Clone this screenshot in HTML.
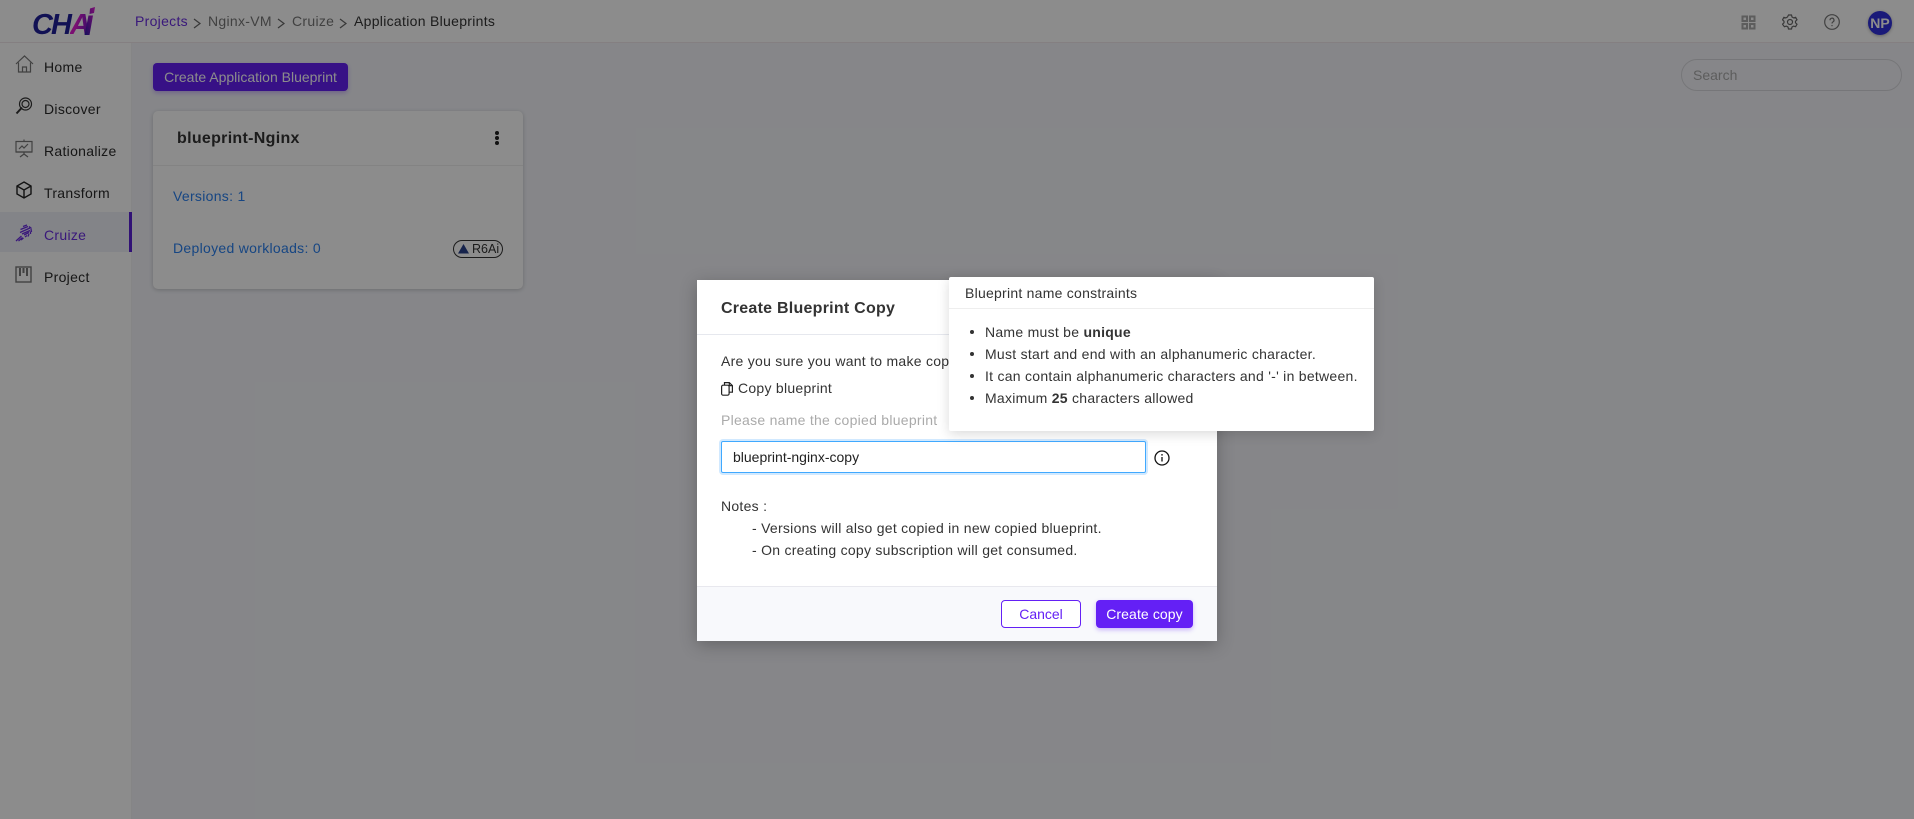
<!DOCTYPE html>
<html><head><meta charset="utf-8"><style>
*{box-sizing:border-box}
html,body{margin:0;padding:0;width:1914px;height:819px;overflow:hidden;background:#f4f5fa;font-family:"Liberation Sans",sans-serif;font-size:14px;color:#222;letter-spacing:.3px}
.a{position:absolute;white-space:nowrap}
.ic{position:absolute;fill:none;stroke:#555;stroke-width:1.2}
.nav{position:absolute;left:44px;font-size:14px;line-height:18px;color:#2a2a2a;letter-spacing:.3px}
.gr{background:linear-gradient(100deg,#e01cd0 30%,#4a18b8 95%);-webkit-background-clip:text;background-clip:text;color:transparent}
</style></head><body>
<div class="a" style="left:0;top:0;width:1914px;height:43px;background:#fff;border-bottom:1px solid #f0e8ec"></div>
<div class="a" style="left:0;top:43px;width:132px;height:776px;background:#fff;border-right:1px solid #f2f2f5"></div>

<div class="a" style="left:32px;top:10px;font:italic bold 29px/30px 'Liberation Sans',sans-serif;letter-spacing:-2px;color:#20209a;padding-right:4px">CH<span class="gr" style="padding-right:3px">A</span></div>
<svg class="a" style="left:80px;top:7px" width="16" height="30" viewBox="0 0 16 30"><defs><linearGradient id="lg" x1="0" y1="1" x2="1" y2="0"><stop offset="0" stop-color="#2a1aa8"/><stop offset="1" stop-color="#e01cd0"/></linearGradient></defs><path d="M8.500 8.500h4.500L9.500 28H4.500zM10 1.500L15 0l-1 6-4.500 1z" fill="url(#lg)"/></svg>

<div class="a" style="left:135px;top:12px;line-height:18px;font-size:14px;color:#6b2fe0">Projects</div>
<div class="a" style="left:208px;top:12px;line-height:18px;font-size:14px;color:#777">Nginx-VM</div>
<div class="a" style="left:292px;top:12px;line-height:18px;font-size:14px;color:#777">Cruize</div>
<div class="a" style="left:354px;top:12px;line-height:18px;font-size:14px;color:#333">Application Blueprints</div>
<svg class="ic" style="left:193px;top:18px;stroke:#666" width="9" height="11"><path d="M1 1l6 4.500L1 10"/></svg>
<svg class="ic" style="left:277px;top:18px;stroke:#666" width="9" height="11"><path d="M1 1l6 4.500L1 10"/></svg>
<svg class="ic" style="left:339px;top:18px;stroke:#666" width="9" height="11"><path d="M1 1l6 4.500L1 10"/></svg>

<svg class="ic" style="left:1741px;top:15px;stroke:#aaa;stroke-width:2" width="15" height="15"><rect x="1.500" y="1.500" width="4.500" height="4.500"/><rect x="9" y="1.500" width="4.500" height="4.500"/><rect x="1.500" y="9" width="4.500" height="4.500"/><rect x="9" y="9" width="4.500" height="4.500"/></svg>
<svg class="ic" style="left:1782px;top:14px;stroke:#666" width="16" height="16" viewBox="0 0 16 16"><path d="M6.500 1h3l.5 2 1.600.9 2-.6 1.400 2.500-1.500 1.400v1.600l1.500 1.400-1.400 2.500-2-.6-1.600.9-.5 2h-3l-.5-2-1.600-.9-2 .6L.5 10.200 2 8.800V7.200L.5 5.800l1.400-2.500 2 .6L5.500 3z"/><circle cx="8" cy="8" r="2.500"/></svg>
<svg class="ic" style="left:1824px;top:14px;stroke:#777" width="16" height="16" viewBox="0 0 16 16"><circle cx="8" cy="8" r="7.300"/><path d="M6 6.200a2 2 0 1 1 3 1.700c-.7.400-1 .8-1 1.600"/><path d="M8 11v1.200"/></svg>
<div class="a" style="left:1868px;top:11px;width:24px;height:24px;border-radius:50%;background:#3030dc;color:#fff;font:bold 14px/24px 'Liberation Sans',sans-serif;text-align:center;letter-spacing:0;box-shadow:0 1px 3px rgba(0,0,0,.3)">NP</div>

<svg class="ic" style="left:15px;top:55px;stroke:#777" width="19" height="18" viewBox="0 0 19 18"><path d="M1 9l8.500-8L18 9M3.500 7.500V17h12V7.500M7.500 17v-5h4v5"/></svg>
<div class="nav" style="top:58px">Home</div>
<svg class="ic" style="left:15px;top:97px;stroke:#333" width="18" height="18" viewBox="0 0 18 18"><circle cx="10.500" cy="7" r="6"/><circle cx="10.500" cy="7" r="3.500"/><path d="M7 10.500L1.500 16.500" stroke-width="2"/></svg>
<div class="nav" style="top:100px">Discover</div>
<svg class="ic" style="left:15px;top:139px;stroke:#777" width="18" height="19" viewBox="0 0 18 19"><rect x="1" y="2.500" width="16" height="10.500"/><path d="M9 .5v2M4 10l3-3 2 2 4-4M1 13h16M9 13v2M5 18l4-3 4 3"/></svg>
<div class="nav" style="top:142px">Rationalize</div>
<svg class="ic" style="left:15px;top:181px;stroke:#222;stroke-width:1.400" width="18" height="18" viewBox="0 0 18 18"><path d="M9 1l7 4v8l-7 4-7-4V5zM2 5l7 4 7-4M9 9v8"/></svg>
<div class="nav" style="top:184px">Transform</div>

<div class="a" style="left:0;top:212px;width:132px;height:40px;background:#eef0f8;border-right:3px solid #5a1fd8"></div>
<svg class="ic" style="left:15px;top:224px;stroke:#6a2ce0;stroke-width:1.300" width="18" height="18" viewBox="0 0 18 18"><path d="M8 2.500L12 1M5.500 5.500L13 2.500M14 2.500l2.500 2M5 8.500L15 4M16 5l.5 3M7 10l8-3.500M15.500 7.500L15.500 10M9 11l5-2.500M14 10l-1 2.500M10 13l2-1.500M1 17l5.500-5M3.500 17l4-3.500M6 16l2.500-2"/></svg>
<div class="nav" style="top:226px;color:#6a2ce0">Cruize</div>

<svg class="ic" style="left:15px;top:266px;stroke:#777;stroke-width:1.400" width="17" height="17" viewBox="0 0 17 17"><rect x="1" y="1" width="15" height="15"/><path d="M5 2v8M8.500 2v5M12 2v8" stroke-width="2"/></svg>
<div class="nav" style="top:268px">Project</div>

<div class="a" style="left:153px;top:63px;width:195px;height:28px;border-radius:4px;background:#6420f5;color:#fff;text-align:center;line-height:28px;font-size:14px;letter-spacing:0;box-shadow:0 2px 5px rgba(100,32,245,.3)">Create Application Blueprint</div>
<div class="a" style="left:1681px;top:59px;width:221px;height:32px;border:1px solid #d8d8dc;border-radius:16px;padding-left:11px;line-height:30px;color:#aaa;font-size:14px;letter-spacing:0">Search</div>

<div class="a" style="left:153px;top:111px;width:370px;height:178px;background:#fff;border-radius:5px;box-shadow:0 1px 5px rgba(0,0,0,.2)"></div>
<div class="a" style="left:153px;top:165px;width:370px;height:1px;background:#eee"></div>
<div class="a" style="left:177px;top:129px;font-weight:bold;font-size:16px;line-height:20px;color:#333;letter-spacing:.3px">blueprint-Nginx</div>
<svg class="a" style="left:494px;top:130px" width="6" height="16"><circle cx="3" cy="3" r="2" fill="#222"/><circle cx="3" cy="8" r="2" fill="#222"/><circle cx="3" cy="13" r="2" fill="#222"/></svg>
<div class="a" style="left:173px;top:187px;line-height:18px;font-size:14px;color:#2a80ee">Versions: 1</div>
<div class="a" style="left:173px;top:239px;line-height:18px;font-size:14px;color:#2a80ee">Deployed workloads: 0</div>
<div class="a" style="left:453px;top:240px;width:50px;height:18px;border:1px solid #333;border-radius:9px;font-size:12.500px;line-height:16px;padding-left:18px;letter-spacing:0;color:#333">R6Ai</div>
<svg class="a" style="left:458px;top:244px" width="11" height="10"><path d="M5.500 0L11 9.500H0z" fill="#28408a"/></svg>

<div class="a" style="left:0;top:0;width:1914px;height:819px;background:rgba(0,0,0,.45)"></div>

<div class="a" style="left:697px;top:280px;width:520px;height:361px;background:#fff;box-shadow:0 4px 16px rgba(0,0,0,.25)"></div>
<div class="a" style="left:697px;top:334px;width:520px;height:1px;background:#e6e8ee"></div>
<div class="a" style="left:721px;top:298px;font-weight:bold;font-size:16px;line-height:21px;color:#333;letter-spacing:.25px">Create Blueprint Copy</div>
<div class="a" style="left:721px;top:352px;line-height:18px;font-size:14px;letter-spacing:.27px;color:#333">Are you sure you want to make copy of</div>
<svg class="ic" style="left:721px;top:382px;stroke:#222" width="12" height="14" viewBox="0 0 12 14"><rect x=".6" y="3.200" width="7.500" height="10" rx="1.500"/><path d="M3.500 3.200V.6h4.800l3.100 3v6.600H8.100M8.300 .6v3h3.100"/></svg>
<div class="a" style="left:738px;top:379px;line-height:18px;font-size:14px;color:#333;letter-spacing:.27px">Copy blueprint</div>
<div class="a" style="left:721px;top:411px;line-height:18px;font-size:14px;letter-spacing:.27px;color:#aaa">Please name the copied blueprint</div>
<div class="a" style="left:721px;top:441px;width:425px;height:32px;border:1px solid #40a9ff;border-radius:2px;box-shadow:0 0 0 2px rgba(24,144,255,.2);padding-left:11px;line-height:30px;font-size:14px;letter-spacing:0;color:#222">blueprint-nginx-copy</div>
<svg class="ic" style="left:1154px;top:450px;stroke:#111;stroke-width:1.300" width="16" height="16" viewBox="0 0 16 16"><circle cx="8" cy="8" r="7"/><path d="M8 7v4.500M8 4v1.600"/></svg>
<div class="a" style="left:721px;top:495px;line-height:22px;font-size:14px;letter-spacing:.27px;color:#333">Notes :<br><span style="margin-left:31px">- Versions will also get copied in new copied blueprint.</span><br><span style="margin-left:31px">- On creating copy subscription will get consumed.</span></div>
<div class="a" style="left:697px;top:586px;width:520px;height:55px;background:#f8f9fc;border-top:1px solid #e8e8ee"></div>
<div class="a" style="left:1001px;top:600px;width:80px;height:28px;background:#fff;border:1px solid #6420f5;border-radius:4px;color:#6420f5;text-align:center;line-height:26px;font-size:14px;letter-spacing:0">Cancel</div>
<div class="a" style="left:1096px;top:600px;width:97px;height:28px;background:#6420f5;border-radius:4px;color:#fff;text-align:center;line-height:28px;font-size:14px;letter-spacing:.1px;box-shadow:0 2px 5px rgba(100,32,245,.3)">Create copy</div>

<div class="a" style="left:1158px;top:427px;width:9px;height:9px;background:#fff;transform:rotate(45deg)"></div>
<div class="a" style="left:949px;top:277px;width:425px;height:154px;background:#fff;border-radius:2px;box-shadow:0 3px 12px rgba(0,0,0,.15)"></div>
<div class="a" style="left:949px;top:308px;width:425px;height:1px;background:#eee"></div>
<div class="a" style="left:965px;top:284px;line-height:18px;font-size:14px;letter-spacing:.25px;color:#333">Blueprint name constraints</div>
<div class="a" style="left:985px;top:321px;font-size:14px;line-height:22px;letter-spacing:.27px;color:#333">Name must be <b>unique</b><br>Must start and end with an alphanumeric character.<br>It can contain alphanumeric characters and '-' in between.<br>Maximum <b>25</b> characters allowed</div>
<svg class="a" style="left:968px;top:321px" width="8" height="88"><circle cx="4" cy="11" r="2" fill="#333"/><circle cx="4" cy="33" r="2" fill="#333"/><circle cx="4" cy="55" r="2" fill="#333"/><circle cx="4" cy="77" r="2" fill="#333"/></svg>
</body></html>
